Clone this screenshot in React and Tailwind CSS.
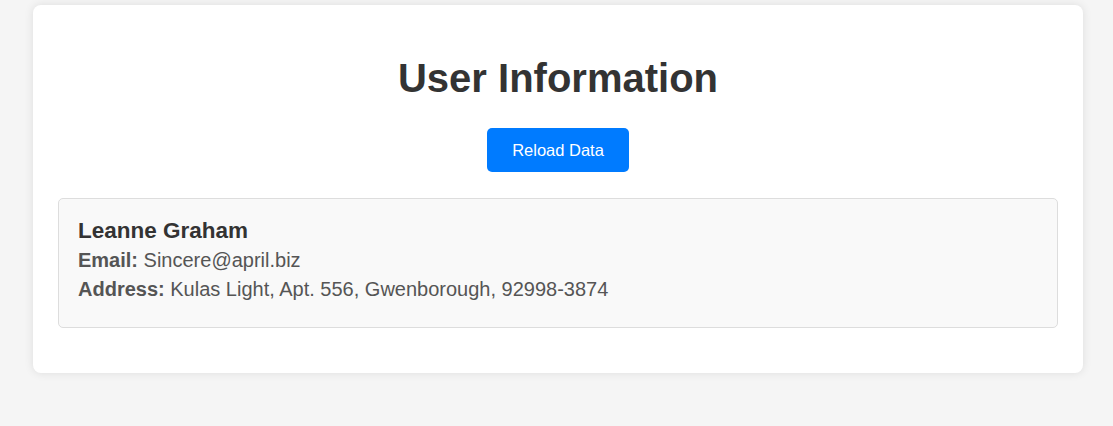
export default function App() {
  return (
    <div className="min-h-[426px] w-full bg-[#f5f5f5] pt-[5px]" style={{ fontFamily: '"Liberation Sans", Arial, sans-serif' }}>
      <div className="ml-[33px] w-[1050px] h-[368px] rounded-[8px] bg-white px-[25px] pt-[49px] shadow-[0_0_10px_rgba(0,0,0,0.1)]">
        <h1 className="text-center text-[40px] font-bold leading-[48px] text-[#333]">User Information</h1>
        <div className="mt-[26px] flex justify-center">
          <button className="h-[44px] w-[142px] rounded-[5px] bg-[#007bff] text-[16.5px] text-white">Reload Data</button>
        </div>
        <div className="mt-[26px] h-[130px] rounded-[5px] border border-[#ddd] bg-[#f9f9f9] px-[19px] pt-[18px]">
          <h2 className="text-[22.5px] font-bold leading-[27px] text-[#333]">Leanne Graham</h2>
          <p className="mt-[2px] text-[20px] leading-[29px] text-[#555]"><strong>Email:</strong> Sincere@april.biz</p>
          <p className="text-[20px] leading-[29px] text-[#555]"><strong>Address:</strong> Kulas Light, Apt. 556, Gwenborough, 92998-3874</p>
        </div>
      </div>
    </div>
  );
}
